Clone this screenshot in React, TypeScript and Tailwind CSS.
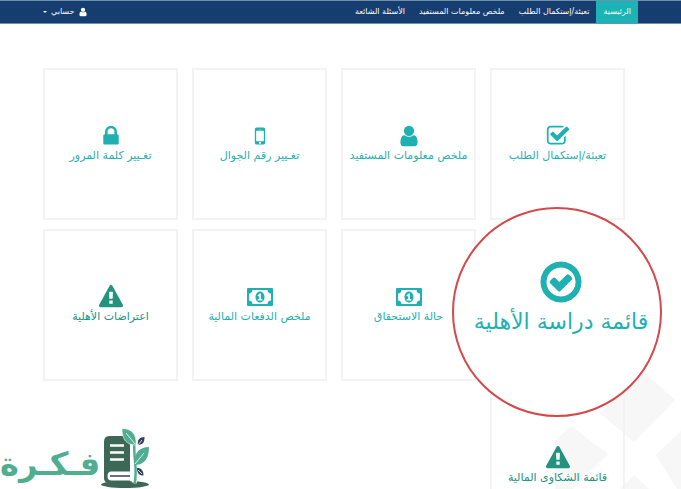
const ICONS = {
  check:
    'M1472 930v318q0 119-84.5 203.5t-203.5 84.5h-832q-119 0-203.5-84.5t-84.5-203.5v-832q0-119 84.5-203.5t203.5-84.5h832q63 0 117 25 15 7 18 23 3 17-9 29l-49 49q-10 10-23 10-3 0-9-2-23-6-45-6h-832q-66 0-113 47t-47 113v832q0 66 47 113t113 47h832q66 0 113-47t47-113v-254q0-13 9-22l64-64q10-10 23-10 6 0 12 3 20 8 20 29zm231-489l-814 814q-24 24-57 24t-57-24l-430-430q-24-24-24-57t24-57l110-110q24-24 57-24t57 24l263 263 647-647q24-24 57-24t57 24l110 110q24 24 24 57t-24 57z',
  user:
    'M1536 1399q0 109-62.5 187t-150.5 78h-854q-88 0-150.5-78t-62.5-187q0-85 8.5-160.5t31.5-152 58.5-131 94-89 134.5-34.5q131 128 313 128t313-128q76 0 134.5 34.5t94 89 58.5 131 31.5 152 8.5 160.5zm-256-887q0 159-112.5 271.5t-271.5 112.5-271.5-112.5-112.5-271.5 112.5-271.5 271.5-112.5 271.5 112.5 112.5 271.5z',
  mobile:
    'M976 1408q0-33-23.5-56.5t-56.5-23.5-56.5 23.5-23.5 56.5 23.5 56.5 56.5 23.5 56.5-23.5 23.5-56.5zm208-160v-704q0-13-9.5-22.5t-22.5-9.5h-512q-13 0-22.5 9.5t-9.5 22.5v704q0 13 9.5 22.5t22.5 9.5h512q13 0 22.5-9.5t9.5-22.5zm-192-848q0-16-16-16h-160q-16 0-16 16t16 16h160q16 0 16-16zm288-16v1024q0 52-38 90t-90 38h-512q-52 0-90-38t-38-90v-1024q0-52 38-90t90-38h512q52 0 90 38t38 90z',
  lock:
    'M640 768h512v-192q0-106-75-181t-181-75-181 75-75 181v192zm832 96v576q0 40-28 68t-68 28h-960q-40 0-68-28t-28-68v-576q0-40 28-68t68-28h32v-192q0-184 132-316t316-132 316 132 132 316v192h32q40 0 68 28t28 68z',
  circle:
    'M1299 813l-422 422q-19 19-45 19t-45-19l-294-294q-19-19-19-45t19-45l102-102q19-19 45-19t45 19l147 147 275-275q19-19 45-19t45 19l102 102q19 19 19 45t-19 45zm141 83q0-148-73-273t-198-198-273-73-273 73-198 198-73 273 73 273 198 198 273 73 273-73 198-198 73-273zm224 0q0 209-103 385.5t-279.5 279.5-385.5 103-385.5-103-279.5-279.5-103-385.5 103-385.5 279.5-279.5 385.5-103 385.5 103 279.5 279.5 103 385.5z',
  warning:
    'M1024 1375v-190q0-14-9.5-23.5t-22.5-9.5h-192q-13 0-22.5 9.5t-9.5 23.5v190q0 14 9.5 23.5t22.5 9.5h192q13 0 22.5-9.5t9.5-23.5zm-2-374l18-459q0-12-10-19-13-11-24-11h-220q-11 0-24 11-10 7-10 21l17 457q0 10 10 16.5t24 6.5h185q14 0 23.5-6.5t10.5-16.5zm-14-934l768 1408q35 63-2 126-17 29-46.5 46t-63.5 17h-1536q-34 0-63.5-17t-46.5-46q-37-63-2-126l768-1408q17-31 47-49t65-18 65 18 47 49z',
}

type IconName = keyof typeof ICONS | 'money'

function Icon({ name, className }: { name: IconName; className: string }) {
  if (name === 'money') {
    return (
      <svg viewBox="0 0 26 18" className={className} fill="currentColor" aria-hidden="true">
        <path
          fillRule="evenodd"
          d="M1 0h24a1 1 0 0 1 1 1v16a1 1 0 0 1-1 1H1a1 1 0 0 1-1-1V1a1 1 0 0 1 1-1zM5.500 2A3.800 3.800 0 0 1 2 5.500v7A3.800 3.800 0 0 1 5.500 16h15a3.800 3.800 0 0 1 3.500-3.500v-7A3.800 3.800 0 0 1 20.500 2z"
        />
        <path
          fillRule="evenodd"
          d="M13 3.500c2.700 0 4.500 2.500 4.500 5.500s-1.800 5.500-4.500 5.500S8.500 12 8.500 9s1.800-5.500 4.500-5.500zM12.600 5.500l-2.300 2 .9 1.100 1-.8v3.200h-1.400v1.400h4.500V11h-1.400V5.500z"
        />
      </svg>
    )
  }
  return (
    <svg viewBox="0 0 1792 1792" className={className} fill="currentColor" aria-hidden="true">
      <path d={ICONS[name]} />
    </svg>
  )
}

const links = ['الرئيسية', 'تعبئة/إستكمال الطلب', 'ملخص معلومات المستفيد', 'الأسئلة الشائعة']

const cards: { label: string; icon: IconName; size: string; color: string; highlight?: boolean }[] = [
  { label: 'تعبئة/إستكمال الطلب', icon: 'check', size: 'size-6', color: 'text-[#1fb0b2]' },
  { label: 'ملخص معلومات المستفيد', icon: 'user', size: 'size-6', color: 'text-[#1fb0b2]' },
  { label: 'تغـيير رقم الجوال', icon: 'mobile', size: 'size-6', color: 'text-[#1fb0b2]' },
  { label: 'تغـيير كلمة المرور', icon: 'lock', size: 'size-6', color: 'text-[#1fb0b2]' },
  { label: 'قائمة دراسة الأهلية', icon: 'circle', size: 'size-12', color: 'text-[#1fb0b2]', highlight: true },
  { label: 'حالة الاستحقاق', icon: 'money', size: 'h-6 w-[26px]', color: 'text-[#1fb0b2]' },
  { label: 'ملخص الدفعات المالية', icon: 'money', size: 'h-6 w-[26px]', color: 'text-[#1fb0b2]' },
  { label: 'اعتراضات الأهلية', icon: 'warning', size: 'size-6', color: 'text-[#22937f]' },
  { label: 'قائمة الشكاوى المالية', icon: 'warning', size: 'size-6', color: 'text-[#22937f]' },
]

function Navbar() {
  return (
    <nav className="flex h-6 items-stretch justify-between border-y border-[#6f8fae] bg-[#153d70] px-[43px] text-[8px] text-white">
      <div className="flex">
        {links.map((l, i) => (
          <a
            key={l}
            href="#"
            className={`flex items-center whitespace-nowrap px-[7px] ${i === 0 ? 'bg-[#1ab4b5]' : ''}`}
          >
            {l}
          </a>
        ))}
      </div>
      <button type="button" className="flex items-center gap-1">
        <Icon name="user" className="size-2.5" />
        حسابي
        <svg viewBox="0 0 4 2" className="h-[2px] w-1" fill="currentColor" aria-hidden="true">
          <path d="M0 0h4L2 2z" />
        </svg>
      </button>
    </nav>
  )
}

function Logo() {
  return (
    <div className="absolute bottom-0 left-0 flex items-end text-[#4fae90]">
      <svg viewBox="0 0 50 62" className="h-[62px] w-[50px]" aria-hidden="true">
        <ellipse cx="25" cy="57.500" rx="24" ry="3.500" fill="#3d6858" />
        <path d="M9 9h18q3 0 3 3v44H9q-5 0-5-5V15q0-6 5-6z" fill="#3d6858" />
        <path d="M30 44.500H11.500q-4 0-4 4.500t4 4.500H30" fill="#fff" />
        <path d="M10 49h20" stroke="#353f62" strokeWidth="1.500" />
        <path d="M10 18.500h14M10 25.500h14M10 32.500h14" stroke="#fff" strokeWidth="2.500" />
        <path d="M34 56C38 43 31 28 34 15" stroke="#fff" strokeWidth="5" fill="none" />
        <path d="M34.500 57C38 43 33 29 34.500 16" stroke="#4fae90" strokeWidth="2.500" fill="none" />
        <path d="M22 1.500c9 0 15 5 14 16.500-9 0-14-5-14-16.500z" fill="#4fae90" stroke="#fff" strokeWidth=".6" />
        <path d="M49 20c-10 0-15 6-15 18 10 0 15-6 15-18z" fill="#4fae90" />
        <path d="M26 6l9 11M35 37l9-11" stroke="#fff" strokeWidth=".8" />
        <path d="M44.500 10c-5 0-7.500 3-6.500 8 5.500-.5 6.500-3 6.500-8zM37 41c0 5 2 7.500 6.500 7.500 0-5-2-7.500-6.500-7.500z" fill="#353f62" />
        <path d="M38 18l4-5M38 43l4 4" stroke="#fff" strokeWidth=".8" />
      </svg>
      <span className="text-[32px] leading-[50px] font-bold">فـكـرة</span>
    </div>
  )
}

export default function App() {
  return (
    <div
      dir="rtl"
      className="relative h-screen overflow-hidden bg-white font-['DejaVu_Sans','Noto_Sans',sans-serif]"
    >
      <svg viewBox="0 0 126 120" className="absolute right-0 bottom-0 h-[120px] w-[126px]" fill="#f7f7f7" aria-hidden="true">
        <path d="M89 3l31 28-41 42-34-29zM16 57l37 28-35 35H0V72zM101 86l25-24v58h-4zM79 106l15 14H65z" />
      </svg>
      <Navbar />
      <main className="relative grid grid-cols-4 gap-x-[14px] gap-y-[9px] pt-11 pr-[56px] pl-[43px]">
        {cards.map((c) => (
          <a
            key={c.label}
            href="#"
            className={`relative flex h-[152px] flex-col items-center justify-center border-2 border-[#f3f3f3] text-[11px] leading-4 ${c.color}`}
          >
            {c.highlight ? (
              <span className="absolute -top-6 -left-10 z-10 flex size-[210px] flex-col items-center justify-center rounded-full border-2 border-[#d5484b] bg-white pb-7 pl-2 text-[22px] leading-8 whitespace-nowrap">
                <Icon name={c.icon} className={c.size} />
                {c.label}
              </span>
            ) : (
              <>
                <Icon name={c.icon} className={c.size} />
                <span className="whitespace-nowrap">{c.label}</span>
              </>
            )}
          </a>
        ))}
      </main>
      <Logo />
    </div>
  )
}
